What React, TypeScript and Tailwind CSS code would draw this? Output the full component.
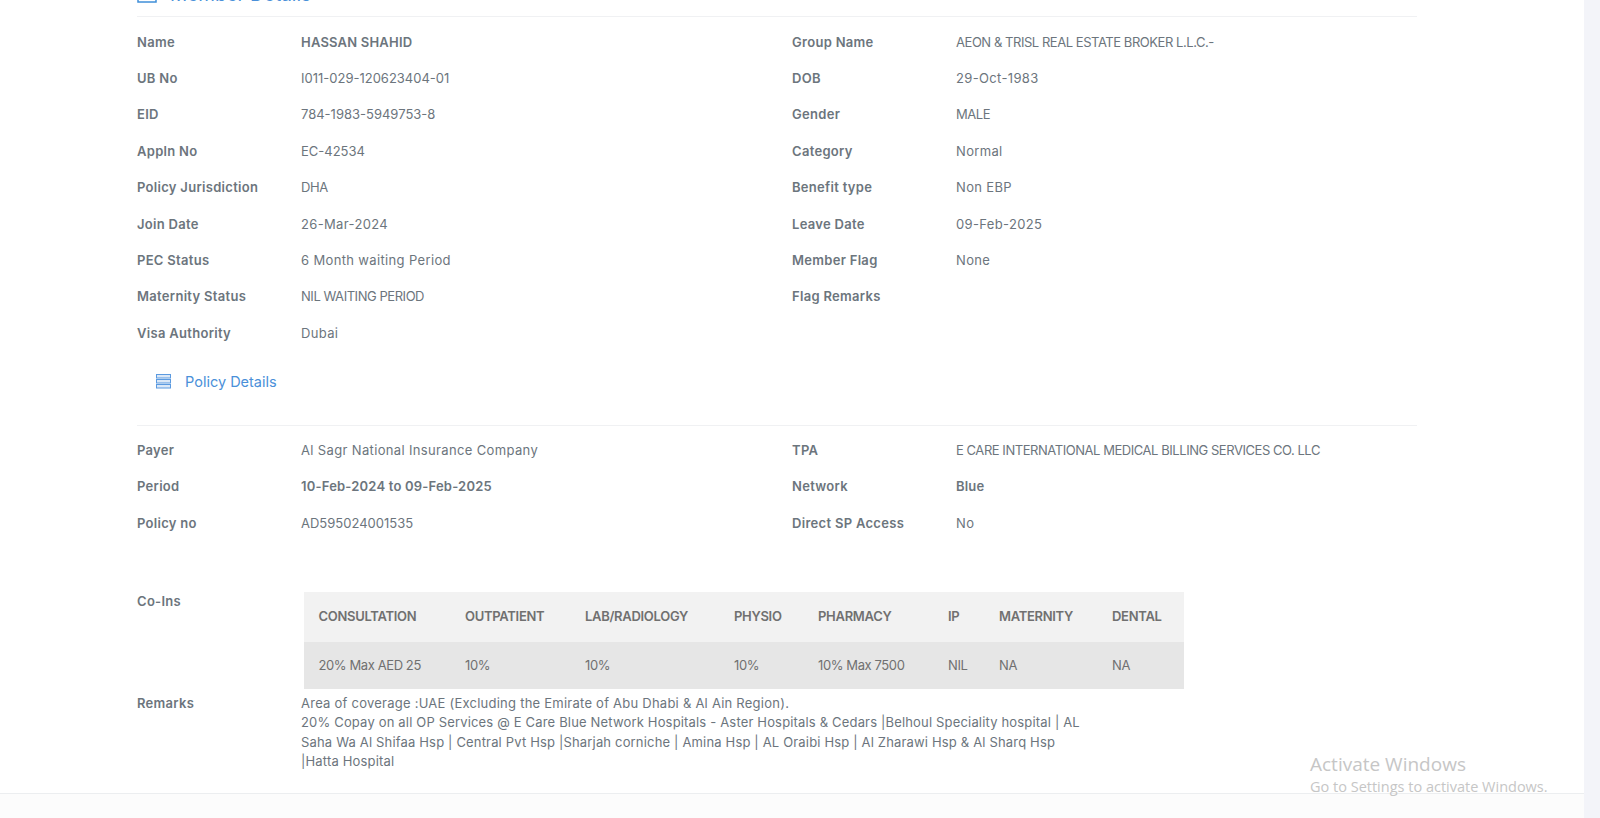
const memberRows = [
  ["Name", "HASSAN SHAHID", "Group Name", "AEON & TRISL REAL ESTATE BROKER L.L.C.-"],
  ["UB No", "I011-029-120623404-01", "DOB", "29-Oct-1983"],
  ["EID", "784-1983-5949753-8", "Gender", "MALE"],
  ["Appln No", "EC-42534", "Category", "Normal"],
  ["Policy Jurisdiction", "DHA", "Benefit type", "Non EBP"],
  ["Join Date", "26-Mar-2024", "Leave Date", "09-Feb-2025"],
  ["PEC Status", "6 Month waiting Period", "Member Flag", "None"],
  ["Maternity Status", "NIL WAITING PERIOD", "Flag Remarks", ""],
  ["Visa Authority", "Dubai", "", ""],
];

const policyRows = [
  ["Payer", "Al Sagr National Insurance Company", "TPA", "E CARE INTERNATIONAL MEDICAL BILLING SERVICES CO. LLC"],
  ["Period", "10-Feb-2024 to 09-Feb-2025", "Network", "Blue"],
  ["Policy no", "AD595024001535", "Direct SP Access", "No"],
];

const coIns = [
  { head: "CONSULTATION", value: "20% Max AED 25", width: "w-[146.5px]" },
  { head: "OUTPATIENT", value: "10%", width: "w-[120px]" },
  { head: "LAB/RADIOLOGY", value: "10%", width: "w-[149px]" },
  { head: "PHYSIO", value: "10%", width: "w-[84px]" },
  { head: "PHARMACY", value: "10% Max 7500", width: "w-[130px]" },
  { head: "IP", value: "NIL", width: "w-[51px]" },
  { head: "MATERNITY", value: "NA", width: "w-[113px]" },
  { head: "DENTAL", value: "NA", width: "w-[72px]" },
];

// Inter runs wider in caps and narrower in lower case than the reference face
function valueClass(text: string, bold: boolean) {
  if (bold) return "font-semibold tracking-[0.2px]";
  if (/^[A-Z0-9\-]*\d[A-Z0-9\-]*$/.test(text)) return "tracking-[0px]";
  if (text === text.toUpperCase()) return "tracking-[-0.45px]";
  return "tracking-[0.35px]";
}

function DetailRows({ rows, boldValues = [] }: { rows: string[][]; boldValues?: string[] }) {
  return (
    <div>
      {rows.map((row) => (
        <div key={row[0]} className="flex h-[36.4px] items-center">
          <div className="w-[164px] text-[13px] font-semibold tracking-[0.3px]">{row[0]}</div>
          <div className={`w-[491px] text-[13px] ${valueClass(row[1], boldValues.includes(row[1]))}`}>{row[1]}</div>
          <div className="w-[164px] text-[13px] font-semibold tracking-[0.3px]">{row[2]}</div>
          <div className={`text-[13px] ${valueClass(row[3], boldValues.includes(row[3]))}`}>{row[3]}</div>
        </div>
      ))}
    </div>
  );
}

export default function App() {
  return (
    <div className="relative flex h-[818px] w-[1600px] overflow-hidden bg-[#f3f4f9] font-['Inter',sans-serif] text-[#6c757d]">
      <div className="h-full w-[1584px] bg-[#fcfcfc]">
        <div className="h-[794px] overflow-hidden border-b border-[#eceef0] bg-white pl-[137px]">
          <div className="w-[1280px]">
            <div className="-mt-[12px] flex h-[29px] items-start border-b border-[#f0f1f3]">
              <svg width="20" height="15" viewBox="0 0 20 15" fill="none" stroke="#3f8fd9" strokeWidth="1.5">
                <rect x="1" y="1" width="18" height="13" />
              </svg>
              <span className="ml-[13px] mt-[-5px] text-[19px] leading-[24px] text-[#4a90d9]">Member Details</span>
            </div>
            <div className="pt-[7.2px]">
              <DetailRows rows={memberRows} boldValues={["HASSAN SHAHID"]} />
            </div>
            <div className="flex h-[73.8px] items-start border-b border-[#f0f1f3] pl-[19px] pt-[21px]">
              <svg width="15" height="15" viewBox="0 0 15 15" className="mt-[1px]" fill="#dbe8f7" stroke="#5b9ae0" strokeWidth="1">
                <rect x="0.5" y="0.5" width="14" height="3.5" />
                <rect x="0.5" y="5.5" width="14" height="3.5" />
                <rect x="0.5" y="10.5" width="14" height="3.5" />
              </svg>
              <span className="ml-[14px] text-[14.5px] leading-[18px] text-[#4a90d9]">Policy Details</span>
            </div>
            <div className="pt-[7px]">
              <DetailRows rows={policyRows} boldValues={["10-Feb-2024 to 09-Feb-2025", "Blue"]} />
            </div>
            <div className="mt-[50px] flex">
              <div className="w-[167px] text-[13px] font-semibold tracking-[0.3px]">Co-Ins</div>
              <div className="w-[880px]">
                <div className="flex h-[50px] items-center bg-[#f2f2f2] pl-[14.5px] text-[13px] font-semibold tracking-[-0.3px] text-[#707070]">
                  {coIns.map((c) => (
                    <div key={c.head} className={c.width}>{c.head}</div>
                  ))}
                </div>
                <div className="flex h-[47px] items-center bg-[#e6e6e6] pl-[14.5px] pt-[2px] text-[13px] tracking-[-0.4px] text-[#707070]">
                  {coIns.map((c) => (
                    <div key={c.head} className={c.width}>{c.value}</div>
                  ))}
                </div>
              </div>
            </div>
            <div className="mt-[5px] flex">
              <div className="w-[164px] text-[13px] leading-[19px] font-semibold tracking-[0.3px]">Remarks</div>
              <div className="w-[790px] text-[13px] leading-[19.6px] tracking-[0.17px]">
                <span className="tracking-[0.24px]">Area of coverage :UAE (Excluding the Emirate of Abu Dhabi &amp; Al Ain Region).</span>
                <br />
                20% Copay on all OP Services @ E Care Blue Network Hospitals - Aster Hospitals &amp; Cedars |Belhoul Speciality hospital | AL Saha Wa Al Shifaa Hsp | Central Pvt Hsp |Sharjah corniche | Amina Hsp | AL Oraibi Hsp | Al Zharawi Hsp &amp; Al Sharq Hsp |Hatta Hospital
              </div>
            </div>
          </div>
        </div>
      </div>
      <div className="absolute left-[1310px] top-[751px] font-['Open_Sans',sans-serif] text-[#c6c6c6]">
        <div className="text-[19px] leading-[26px]">Activate Windows</div>
        <div className="text-[14.5px] leading-[20px]">Go to Settings to activate Windows.</div>
      </div>
    </div>
  );
}
